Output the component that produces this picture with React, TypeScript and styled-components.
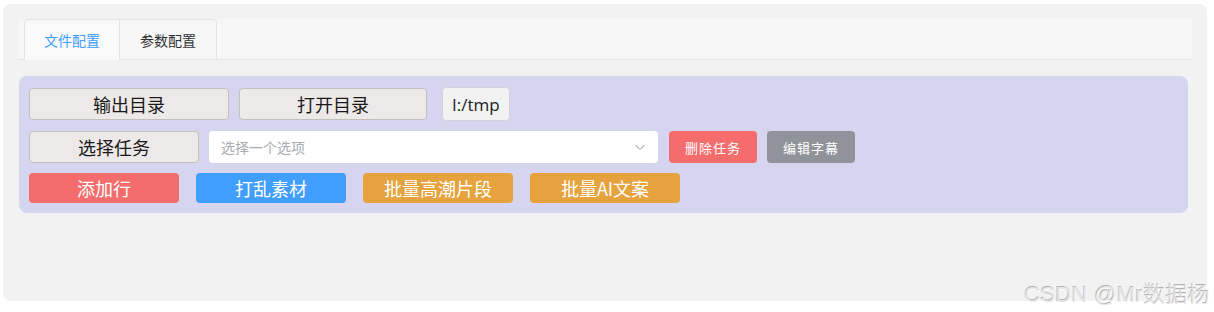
import React from 'react';
import styled, { createGlobalStyle } from 'styled-components';

const GlobalStyle = createGlobalStyle`
  html, body {
    margin: 0;
    padding: 0;
    background: #ffffff;
  }
  body {
    font-family: "Noto Sans CJK SC", "Noto Sans", sans-serif;
  }
`;

const Page = styled.div`
  position: relative;
  width: 1214px;
  height: 312px;
  padding: 4px 0 0 3px;
  box-sizing: border-box;
`;

const Card = styled.div`
  width: 1204px;
  height: 297px;
  background: #f2f2f2;
  border-radius: 8px;
  padding: 15px 15px 0 15px;
  box-sizing: border-box;
`;

const TabBar = styled.div`
  display: flex;
  height: 41px;
  padding-left: 6px;
  background: #f7f7f7;
  border-bottom: 1px solid #e2e4ea;
  box-sizing: border-box;
`;

const Tab = styled.div<{ $active?: boolean; $w: number }>`
  width: ${p => p.$w}px;
  display: flex;
  align-items: center;
  justify-content: center;
  font-size: 14px;
  color: ${p => (p.$active ? '#409eff' : '#303133')};
  background: ${p => (p.$active ? '#f9f9f9' : '#f7f7f7')};
  border: 1px solid #e2e4ea;
  border-bottom: none;
  border-left: ${p => (p.$active ? '1px solid #e2e4ea' : 'none')};
  border-radius: ${p => (p.$active ? '4px 0 0 0' : '0 4px 0 0')};
  box-sizing: border-box;
  margin-bottom: ${p => (p.$active ? '-1px' : '0')};
  height: ${p => (p.$active ? '41px' : '40px')};
`;

const Panel = styled.div`
  margin: 16px 4px 0 1px;
  background: #d5d5ef;
  border-radius: 8px;
  padding: 11px 10px 10px 10px;
  display: flex;
  flex-direction: column;
  gap: 10px;
`;

const Row = styled.div<{ $gap?: number }>`
  display: flex;
  align-items: center;
  gap: ${p => p.$gap ?? 10}px;
`;

const GrayButton = styled.button<{ $w: number }>`
  width: ${p => p.$w}px;
  height: 32px;
  background: #ede9e8;
  border: 1px solid #c3bfbb;
  border-radius: 4px;
  font-family: "Noto Sans CJK SC", sans-serif;
  font-size: 18px;
  color: #1a1a1a;
  padding: 0;
  display: flex;
  align-items: center;
  justify-content: center;
`;

const PathBox = styled.div`
  height: 34px;
  padding: 0 9px;
  margin-left: 5px;
  background: #f2f2f2;
  border: 1px solid #d2d2d6;
  border-radius: 4px;
  box-sizing: border-box;
  display: flex;
  align-items: center;
  font-family: "Open Sans", "Noto Sans", sans-serif;
  font-size: 17px;
  color: #222;
`;

const Select = styled.div`
  width: 449px;
  height: 32px;
  background: #ffffff;
  border-radius: 4px;
  box-sizing: border-box;
  padding: 0 12px;
  display: flex;
  align-items: center;
  justify-content: space-between;
  font-size: 14px;
  color: #a8abb2;
`;

const SmallButton = styled.button<{ $bg: string }>`
  width: 88px;
  height: 32px;
  margin-left: ${p => (p.$bg === '#f56c6c' ? '1px' : '0')};
  border: none;
  border-radius: 4px;
  background: ${p => p.$bg};
  color: #ffffff;
  font-family: "Noto Sans CJK SC", sans-serif;
  font-size: 13px;
  font-weight: 400;
  letter-spacing: 1px;
  padding: 0;
`;

const ColorButton = styled.button<{ $bg: string }>`
  width: 150px;
  height: 30px;
  border: none;
  border-radius: 4px;
  background: ${p => p.$bg};
  color: #ffffff;
  font-family: "Noto Sans CJK SC", sans-serif;
  font-size: 18px;
  padding: 0;
  display: flex;
  align-items: center;
  justify-content: center;
`;

const Watermark = styled.div`
  position: absolute;
  right: 4px;
  bottom: 4px;
  font-family: "Liberation Sans", "Noto Sans CJK SC", sans-serif;
  font-size: 22px;
  font-weight: 300;
  color: #e6e6e6;
  text-shadow: -0.6px -0.6px 0 #b4b4b4, 0.6px 0.6px 0 #ffffff;
  letter-spacing: 0.3px;
`;

const Chevron = () => (
  <svg width="12" height="12" viewBox="0 0 12 12" fill="none">
    <path d="M1.5 4 L6 8.5 L10.5 4" stroke="#b8bcc4" strokeWidth="1.2" />
  </svg>
);

export default function App() {
  return (
    <Page>
      <GlobalStyle />
      <Card>
        <TabBar>
          <Tab $active $w={96}>文件配置</Tab>
          <Tab $w={97}>参数配置</Tab>
        </TabBar>
        <Panel>
          <Row>
            <GrayButton $w={200}>输出目录</GrayButton>
            <GrayButton $w={188}>打开目录</GrayButton>
            <PathBox>I:/tmp</PathBox>
          </Row>
          <Row>
            <GrayButton $w={170}>选择任务</GrayButton>
            <Select>
              <span>选择一个选项</span>
              <Chevron />
            </Select>
            <SmallButton $bg="#f56c6c">删除任务</SmallButton>
            <SmallButton $bg="#909399">编辑字幕</SmallButton>
          </Row>
          <Row $gap={17}>
            <ColorButton $bg="#f56c6c">添加行</ColorButton>
            <ColorButton $bg="#409eff">打乱素材</ColorButton>
            <ColorButton $bg="#e6a23c">批量高潮片段</ColorButton>
            <ColorButton $bg="#e6a23c">批量AI文案</ColorButton>
          </Row>
        </Panel>
      </Card>
      <Watermark>CSDN @Mr数据杨</Watermark>
    </Page>
  );
}
